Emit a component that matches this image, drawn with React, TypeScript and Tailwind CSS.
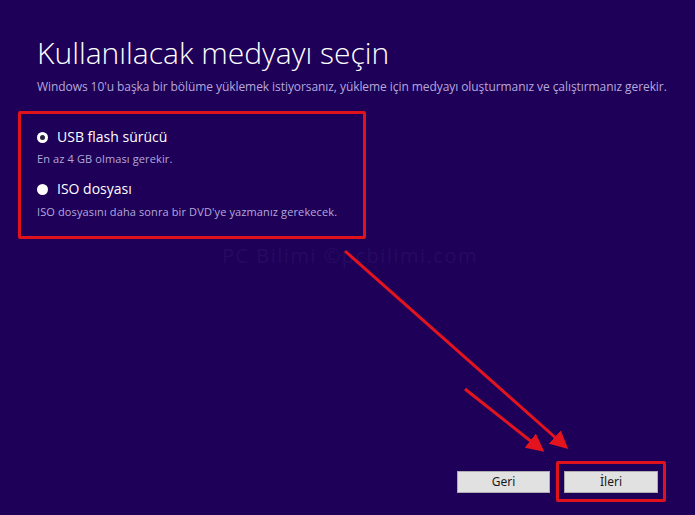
import React from "react";

export default function App() {
  return (
    <div className="relative w-[695px] h-[515px] overflow-hidden bg-[#1e0058] flex flex-col font-['Open_Sans','Noto_Sans',sans-serif]">
      <div className="pl-[37px] pt-[33px]">
        <h1 className="text-[30px] leading-[40px] font-light text-white tracking-[0px]">
          Kullanılacak medyayı seçin
        </h1>
        <p className="mt-[6px] text-[12px] leading-[16px] text-[#b4a9dc] tracking-[-0.07px]">
          Windows 10'u başka bir bölüme yüklemek istiyorsanız, yükleme için medyayı oluşturmanız ve çalıştırmanız gerekir.
        </p>
      </div>

      <div className="ml-[18px] mt-[16px] w-[348px] h-[128px] border-[3px] border-[#e0121c] rounded-[2px] pl-[16px] pt-[13px] flex flex-col">
        <div className="flex items-center gap-[9px] h-[20px]">
          <span className="w-[11px] h-[11px] rounded-full bg-white flex items-center justify-center">
            <span className="w-[5px] h-[5px] rounded-full bg-[#2a2440]" />
          </span>
          <span className="text-[14px] leading-[20px] text-white">USB flash sürücü</span>
        </div>
        <div className="mt-[4px] text-[11px] leading-[16px] text-[#b4a9dc] tracking-[0.12px]">En az 4 GB olması gerekir.</div>
        <div className="mt-[12px] flex items-center gap-[9px] h-[20px]">
          <span className="w-[11px] h-[11px] rounded-full bg-white" />
          <span className="text-[14px] leading-[20px] text-white">ISO dosyası</span>
        </div>
        <div className="mt-[5px] text-[11px] leading-[16px] text-[#b4a9dc] tracking-[0.12px]">
          ISO dosyasını daha sonra bir DVD'ye yazmanız gerekecek.
        </div>
      </div>

      <div className="ml-[222px] mt-[5px] text-[20px] leading-[24px] text-[#260a62] tracking-[1.5px]">
        PC Bilimi ©pcbilimi.com
      </div>

      <div className="flex-1" />

      <div className="flex items-center justify-end pr-[29px] pb-[13px] gap-[6px]">
        <button className="w-[93px] h-[22px] bg-[#e1e1e1] border border-[#adadad] text-[12px] text-[#1a1a1a] font-['Noto_Sans',sans-serif] leading-[20px]">
          Geri
        </button>
        <div className="w-[110px] h-[41px] border-[3px] border-[#e0121c] rounded-[2px] flex items-center justify-center">
          <button className="w-[94px] h-[22px] bg-[#e1e1e1] border border-[#adadad] text-[12px] text-[#1a1a1a] font-['Noto_Sans',sans-serif] leading-[20px]">
            İleri
          </button>
        </div>
      </div>

      <svg className="absolute inset-0 pointer-events-none" width="695" height="515" viewBox="0 0 695 515">
        <defs>
          <marker id="ah" markerWidth="6" markerHeight="6" refX="5" refY="3" orient="auto" markerUnits="strokeWidth">
            <path d="M0,0 L6,3 L0,6 Z" fill="#e3141e" />
          </marker>
        </defs>
        <line x1="345" y1="251" x2="566" y2="447" stroke="#e3141e" strokeWidth="3" markerEnd="url(#ah)" />
        <line x1="465" y1="389" x2="542" y2="450" stroke="#e3141e" strokeWidth="3" markerEnd="url(#ah)" />
      </svg>
    </div>
  );
}
